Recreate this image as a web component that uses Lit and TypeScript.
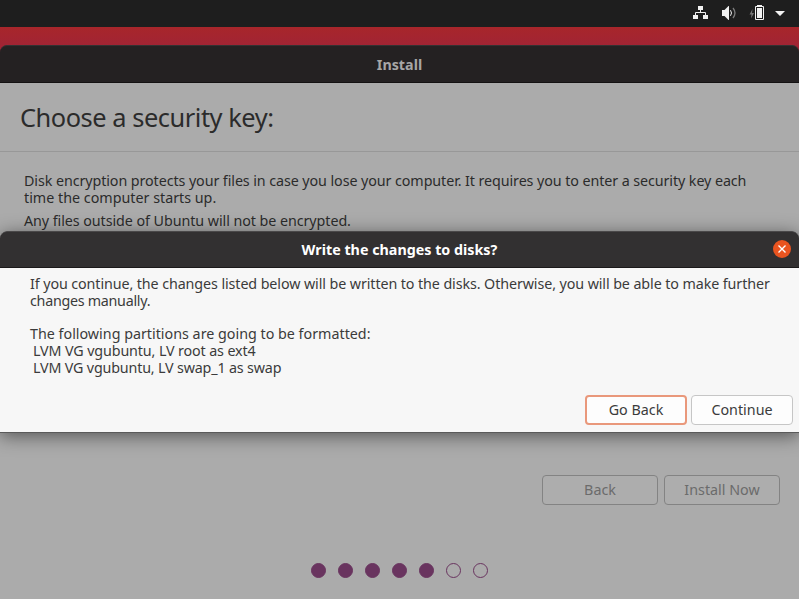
import { LitElement, html, css } from "lit";
import { customElement } from "lit/decorators.js";

@customElement("status-icons")
class StatusIcons extends LitElement {
  static styles = css`
    :host { display: block; height: 27px; }
    svg { display: block; }
    .ink { fill: #f2f2f2; }
    .line { fill: none; stroke: #f2f2f2; }
    .dim { fill: none; stroke: #7d7d7d; }
    .faint { fill: #777; }
  `;
  render() {
    return html`<svg width="107" height="27" viewBox="692 0 107 27">
      <path class="ink" d="M698 6h5v4h-5zM693 15h5v4h-5zM703 15h5v4h-5z" />
      <path class="line" d="M700.5 10v2.5M695.5 15v-2.5h10v2.5" />
      <path class="ink" d="M722 10h2.500l4-4h.5v14h-.5l-4-4H722z" />
      <path class="line" d="M730.500 10.200q2 2.800 0 5.600" />
      <path class="dim" stroke-width="1.300" d="M733 8q4 5 0 10" />
      <path class="faint" d="M752.500 9l-3 5.500h2l-.5 4 3-5.500h-2z" />
      <path class="ink" fill-rule="evenodd" d="M757 5h5v1h1q1 0 1 1v12q0 1-1 1h-7q-1 0-1-1V7q0-1 1-1h1zM756 7v12h7V7z" />
      <path class="ink" d="M757 8h5v10h-5zM775 11h10l-5 5z" />
    </svg>`;
  }
}

@customElement("step-dots")
class StepDots extends LitElement {
  static styles = css`
    :host { display: flex; gap: 12px; }
    .dot { box-sizing: border-box; width: 15px; height: 15px; border-radius: 50%; border: 1px solid #69345f; }
    .done { background: #69345f; }
  `;
  render() {
    return [1, 1, 1, 1, 1, 0, 0].map((d) => html`<span class="dot ${d ? "done" : ""}"></span>`);
  }
}

@customElement("app-root")
class AppRoot extends LitElement {
  static styles = css`
    :host {
      display: flex; flex-direction: column; position: relative; overflow: hidden;
      width: 799px; height: 599px; background: #a12434;
      font: 14.3px/17px "Noto Sans", "Open Sans", sans-serif; color: #2b2b2b;
    }
    .panel { display: flex; justify-content: flex-end; height: 27px; background: #1e1e1e; }
    .gap { height: 18px; background: linear-gradient(#a8262b, #a12434); }
    .window { flex: 1; display: flex; flex-direction: column; background: #ababab; }
    .bar {
      box-sizing: border-box; display: flex; align-items: center; justify-content: center;
      font-weight: 700; border-radius: 7px 7px 0 0;
    }
    .main-bar { height: 38px; background: #242122; border-top: 1px solid #343132; border-bottom: 1px solid #141213; color: #a7a6a6; }
    .heading {
      box-sizing: border-box; height: 69px; padding: 17px 20px; border-bottom: 1px solid #989898;
      font-size: 25.4px; line-height: 35px; letter-spacing: -.46px;
    }
    .copy { height: 323px; box-sizing: border-box; padding: 20px 24px; }
    .line { white-space: pre; }
    .spaced { margin-top: 6px; }
    .tight-s { letter-spacing: -.065px; }
    .tight-m { letter-spacing: -.085px; }
    .tight-l { letter-spacing: -.097px; }
    .tight-xl { letter-spacing: -.28px; }
    .volume { padding-left: 3px; letter-spacing: -.12px; }
    .swap { letter-spacing: -.17px; }
    .nav { display: flex; justify-content: flex-end; gap: 6px; padding-right: 19px; }
    .btn {
      box-sizing: border-box; display: flex; align-items: center; justify-content: center;
      border-radius: 4px; height: 30px; border: 1px solid #838383; white-space: pre; padding-bottom: 2px;
    }
    .nav .btn { width: 116px; color: #6b6b6b; background: #adadad; }
    .dots { display: flex; justify-content: center; padding-top: 58px; }
    .dialog {
      position: absolute; left: 0; top: 231px; width: 799px; height: 202px; box-sizing: border-box;
      display: flex; flex-direction: column; background: #f7f7f7; color: #3b3b3b;
      border-radius: 7px 7px 0 0; border-bottom: 1px solid #5a5a5a;
      box-shadow: 0 3px 18px 0 rgba(0, 0, 0, .5);
    }
    .dialog-bar { height: 37px; background: #323031; border-top: 1px solid #4a4849; border-bottom: 1px solid #1b191a; color: #fff; position: relative; }
    .close { position: absolute; right: 8px; top: 8px; }
    .message { height: 127px; box-sizing: border-box; padding: 7px 30px; }
    .blank { height: 16px; }
    .actions { display: flex; justify-content: flex-end; gap: 4px; padding-right: 6px; }
    .actions .btn { width: 102px; background: #fdfdfd; border-color: #c6c6c6; }
    .actions .focus { border: 2px solid #e9987b; }
  `;
  render() {
    return html`
      <div class="panel"><status-icons></status-icons></div>
      <div class="gap"></div>
      <div class="bar main-bar">Install</div>
      <div class="window">
        <div class="heading">Choose a security key:</div>
        <div class="copy">
          <div class="line tight-m">Disk encryption protects your files in case you lose your computer. It requires you to enter a security key each</div>
          <div class="line">time the computer starts up.</div>
          <div class="line spaced tight-s">Any files outside of Ubuntu will not be encrypted.</div>
        </div>
        <div class="nav"><div class="btn">Back</div><div class="btn">Install Now</div></div>
        <div class="dots"><step-dots></step-dots></div>
      </div>
      <div class="dialog">
        <div class="bar dialog-bar">Write the changes to disks?
          <svg class="close" width="18" height="18" viewBox="0 0 18 18"><circle cx="9" cy="9" r="9" fill="#e95420" /><path d="M5.500 5.500l7 7M12.500 5.500l-7 7" stroke="#fff" stroke-width="1.400" /></svg>
        </div>
        <div class="message">
          <div class="line tight-l">If you continue, the changes listed below will be written to the disks. Otherwise, you will be able to make further</div>
          <div class="line tight-xl">changes manually.</div>
          <div class="blank"></div>
          <div class="line">The following partitions are going to be formatted:</div>
          <div class="line volume">LVM VG vgubuntu, LV root as ext4</div>
          <div class="line volume swap">LVM VG vgubuntu, LV swap_1 as swap</div>
        </div>
        <div class="actions"><div class="btn focus">Go Back</div><div class="btn">Continue</div></div>
      </div>`;
  }
}
